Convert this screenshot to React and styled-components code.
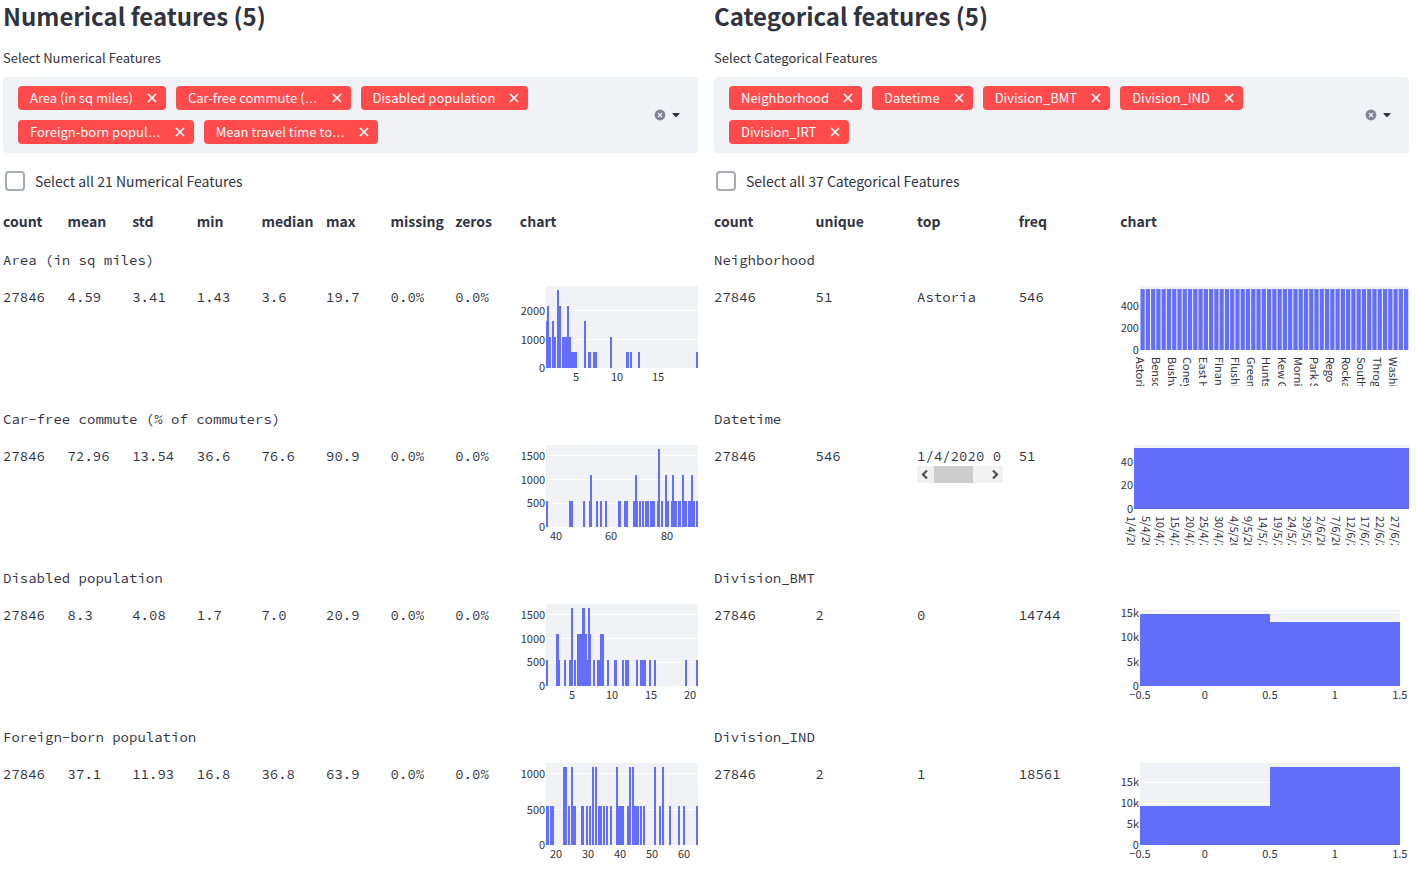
import React, { useId } from "react";
import styled, { createGlobalStyle } from "styled-components";

const INK = "#31333f";
const PANEL = "#f0f2f6";
const BAR = "#636efa";
const SANS = '"Source Sans Pro", "Noto Sans CJK SC", "Open Sans", sans-serif';
const MONO = '"Source Code Pro", "Liberation Mono", monospace';

const GlobalStyle = createGlobalStyle`
  *, *::before, *::after { box-sizing: border-box; }
  body { margin: 0; background: #fff; color: ${INK}; font-family: ${SANS}; }
  button, input { font: inherit; color: inherit; }
`;

const Page = styled.main`
  display: grid;
  grid-template-columns: minmax(0, 1fr) minmax(0, 1fr);
  gap: 16px;
  padding: 0 7px 0 3px;
`;

const Panel = styled.section`
  display: flex;
  flex-direction: column;
  min-width: 0;
`;

const Title = styled.h2`
  margin: 0;
  font-size: 24px;
  line-height: 32px;
  font-weight: 700;
`;

const FieldLabel = styled.label`
  margin-top: 16px;
  font-size: 13px;
  line-height: 20px;
`;

const MultiSelect = styled.div`
  display: flex;
  align-items: center;
  margin-top: 9px;
  padding: 9px 14px 9px 15px;
  border-radius: 4px;
  background: ${PANEL};
`;

const Tags = styled.div`
  display: flex;
  flex: 1;
  flex-wrap: wrap;
  gap: 10px;
  max-width: 560px;
  margin-right: auto;
`;

const Tag = styled.span`
  display: inline-flex;
  align-items: center;
  height: 24px;
  padding: 0 8px 0 12px;
  gap: 13px;
  border-radius: 4px;
  background: #ff4b4b;
  color: #fff;
  font-size: 13px;
  line-height: 24px;
  white-space: nowrap;
`;

const Ellipsis = styled.span`
  font-family: "Liberation Sans", sans-serif;
`;

const IconButton = styled.button`
  display: inline-flex;
  align-items: center;
  justify-content: center;
  width: ${(p) => p.$width}px;
  height: 16px;
  padding: 0;
  border: 0;
  background: none;
`;

const TagInput = styled.input`
  width: 8px;
  height: 24px;
  padding: 0;
  border: 0;
  outline: 0;
  background: transparent;
`;

const Controls = styled.div`
  display: flex;
  align-items: center;
`;

const CheckRow = styled.label`
  display: flex;
  align-items: center;
  gap: 10px;
  margin-top: 16px;
  padding-left: 2px;
  font-size: 14px;
  line-height: 24px;
`;

const Checkbox = styled.input`
  appearance: none;
  width: 20px;
  height: 20px;
  margin: 0;
  border: 2px solid #a9abb2;
  border-radius: 4px;
  background: #fff;
`;

const Table = styled.table`
  display: block;
  margin-top: 17px;
  thead, tbody { display: block; }
`;

const Row = styled.tr`
  display: grid;
  grid-template-columns: ${(p) => p.$columns};
  column-gap: 16px;
`;

const HeadCell = styled.th`
  padding: 0 0 2px;
  font-size: 14px;
  line-height: 22px;
  font-weight: 700;
  text-align: left;
  white-space: nowrap;
`;

const NameRow = styled.tr`
  display: block;
`;

const NameCell = styled.th`
  display: block;
  padding: 15px 0;
  font-family: ${MONO};
  font-size: 14px;
  line-height: 22px;
  font-weight: 400;
  text-align: left;
`;

const ValueRow = styled(Row)`
  height: 107px;
`;

const ValueCell = styled.td`
  min-width: 0;
  padding: 0;
  font-family: ${MONO};
  font-size: 14px;
  line-height: 22px;
  white-space: nowrap;
`;

const Clipped = styled.div`
  height: 21px;
  overflow: hidden;
`;

const ScrollBar = styled.div`
  display: flex;
  height: 17px;
  background: #f1f1f1;
`;

const ScrollTrack = styled.div`
  flex: 1;
`;

const ScrollThumb = styled.div`
  width: 75%;
  height: 17px;
  background: #cdcdcd;
`;

const ChartCell = styled.td`
  min-width: 0;
  padding: 0;
`;

const ChartSvg = styled.svg`
  display: block;
  width: 100%;
  height: 100px;
  overflow: hidden;
  font-family: ${SANS};
  font-size: 11px;
  fill: ${INK};
`;

function Cross() {
  return (
    <svg width="10" height="10" viewBox="0 0 10 10" fill="none" stroke="#fff" strokeWidth="1.7">
      <path d="M1 1 9 9M9 1 1 9" />
    </svg>
  );
}

function ClearIcon() {
  return (
    <svg width="12" height="12" viewBox="0 0 12 12">
      <circle cx="6" cy="6" r="5.4" fill="#808495" />
      <path d="M4 4 8 8M8 4 4 8" stroke={PANEL} strokeWidth="1.1" />
    </svg>
  );
}

function CaretIcon() {
  return (
    <svg width="8" height="4" viewBox="0 0 8 4">
      <path d="M.9 0H7.1Q7.9 .4 7.3 1.1L4.7 3.7Q4 4.2 3.3 3.7L.7 1.1Q.1 .4 .9 0Z" fill={INK} />
    </svg>
  );
}

function Arrow({ d }) {
  return (
    <svg width="17" height="17" viewBox="0 0 17 17" fill="none" stroke="#505050" strokeWidth="2.2">
      <path d={d} />
    </svg>
  );
}

/* Bars are [left, right, level]; levels index into the bar tops of a chart. */
function Chart({ label, width, left, right = width, top = 0, bottom, grid, yTicks, xTicks, bars, tops, smooth, turned }) {
  return (
    <ChartSvg viewBox={`0 0 ${width} 100`} role="img" aria-label={label}>
      <g shapeRendering="crispEdges">
        <rect x={left} y={top} width={right - left} height={bottom - top} fill={PANEL} />
        {grid.map((y) => (
          <rect key={y} x={left} y={y} width={right - left} height="1" fill="#fff" />
        ))}
      </g>
      <g fill={BAR} shapeRendering={smooth ? "auto" : "crispEdges"}>
        {bars.map(([a, b, n]) => (
          <rect key={a} x={a} y={tops[n]} width={b - a} height={bottom - tops[n]} />
        ))}
      </g>
      <g textAnchor="end">
        {yTicks.map(([text, y]) => (
          <text key={text} x={left - 1} y={y + 4}>{text}</text>
        ))}
      </g>
      {turned
        ? xTicks.map(([text, x]) => (
            <text key={text} transform={`translate(${x - 4} 71) rotate(90)`}>{text}</text>
          ))
        : xTicks.map(([text, x]) => (
            <text key={text} x={x} y={bottom + 13} textAnchor="middle">{text}</text>
          ))}
    </ChartSvg>
  );
}

const histogram = { width: 178, left: 26, bottom: 82 };
const wide = { width: 289, left: 20 };

const areaChart = {
  ...histogram,
  grid: [24, 53],
  yTicks: [["2000", 25], ["1000", 54], ["0", 82]],
  xTicks: [["5", 56], ["10", 97], ["15", 138]],
  tops: [82, 66, 51, 35, 20, 4],
  bars: [
    [26, 27, 3], [27, 29, 4], [29, 31, 2], [32, 34, 3], [34, 36, 2], [37, 39, 5], [39, 41, 4],
    [42, 47, 2], [47, 49, 4], [49, 51, 2], [51, 57, 1], [64, 66, 3], [68, 71, 1], [73, 77, 1],
    [90, 92, 2], [106, 109, 1], [110, 112, 1], [118, 120, 1], [176, 178, 1],
  ],
};

const thousandFiveHundred = {
  ...histogram,
  grid: [10, 34, 58],
  yTicks: [["1500", 11], ["1000", 35], ["500", 58], ["0", 82]],
  tops: [82, 56, 30, 4],
};

const commuteChart = {
  ...thousandFiveHundred,
  xTicks: [["40", 36], ["60", 91], ["80", 147]],
  bars: [
    [26, 28, 1], [49, 53, 1], [63, 65, 1], [69, 70, 1], [70, 72, 2], [76, 78, 1], [80, 82, 1],
    [85, 87, 1], [98, 101, 1], [104, 108, 1], [113, 115, 1], [115, 117, 2], [117, 118, 1],
    [119, 121, 1], [122, 124, 1], [125, 129, 1], [130, 135, 1], [137, 138, 1], [138, 140, 3],
    [141, 143, 1], [145, 147, 2], [147, 149, 1], [151, 152, 1], [152, 154, 2], [154, 157, 1],
    [158, 161, 1], [162, 164, 2], [164, 167, 1], [168, 171, 1], [171, 173, 2], [173, 175, 1],
    [176, 178, 1],
  ],
};

const disabledChart = {
  ...thousandFiveHundred,
  xTicks: [["5", 52], ["10", 92], ["15", 131], ["20", 170]],
  bars: [
    [26, 28, 1], [36, 39, 2], [39, 40, 1], [44, 46, 1], [49, 51, 1], [51, 53, 3], [54, 56, 1],
    [57, 62, 2], [62, 65, 3], [65, 67, 2], [67, 68, 1], [68, 70, 3], [70, 71, 2], [73, 75, 1],
    [77, 80, 1], [80, 84, 2], [87, 89, 1], [94, 97, 1], [102, 104, 1], [105, 109, 1],
    [116, 118, 1], [120, 126, 1], [129, 131, 1], [134, 136, 1], [165, 167, 1], [176, 178, 1],
  ],
};

const foreignChart = {
  ...histogram,
  grid: [10, 46],
  yTicks: [["1000", 11], ["500", 47], ["0", 82]],
  xTicks: [["20", 36], ["30", 68], ["40", 100], ["50", 132], ["60", 164]],
  tops: [82, 43, 4],
  bars: [
    [26, 29, 1], [30, 34, 1], [43, 47, 2], [48, 50, 1], [51, 53, 2], [53, 56, 1], [61, 64, 1],
    [66, 68, 1], [69, 71, 1], [72, 74, 2], [75, 77, 2], [78, 82, 1], [83, 85, 1], [86, 88, 1],
    [90, 92, 1], [96, 98, 2], [98, 104, 1], [107, 109, 1], [109, 111, 2], [112, 114, 2],
    [114, 119, 1], [120, 122, 1], [123, 125, 1], [134, 136, 2], [139, 141, 1], [142, 144, 2],
    [149, 151, 1], [158, 160, 1], [163, 165, 1], [176, 178, 1],
  ],
};

const places = [
  "Astoria", "Bensonhurst", "Bushwick", "Coney Island", "East Harlem", "Financial District",
  "Flushing", "Greenwich Village", "Hunts Point", "Kew Gardens", "Morningside", "Park Slope",
  "Rego Park", "Rockaways", "South Beach", "Throgs Neck", "Washington Heights",
];
const placeStep = 269 / 51;

const neighborhoodChart = {
  ...wide,
  bottom: 64,
  turned: true,
  smooth: true,
  grid: [19, 41],
  yTicks: [["400", 20], ["200", 42], ["0", 64]],
  xTicks: places.map((name, i) => [name, 20 + i * 3 * placeStep]),
  tops: [64, 3],
  bars: Array.from({ length: 51 }, (_, i) => [
    20 + (i + 0.1) * placeStep,
    20 + (i + 0.9) * placeStep,
    1,
  ]),
};

const dates = [
  "1/4/2020", "5/4/2020", "10/4/2020", "15/4/2020", "20/4/2020", "25/4/2020", "30/4/2020",
  "4/5/2020", "9/5/2020", "14/5/2020", "19/5/2020", "24/5/2020", "29/5/2020", "2/6/2020",
  "7/6/2020", "12/6/2020", "17/6/2020", "22/6/2020", "27/6/2020",
];

const datetimeChart = {
  ...wide,
  left: 14,
  bottom: 64,
  turned: true,
  grid: [],
  yTicks: [["40", 17], ["20", 40], ["0", 64]],
  xTicks: dates.map((date, i) => [date, 11 + (i * 264) / 18]),
  tops: [64, 3],
  bars: [[14, 289, 1]],
};

const halves = [["−0.5", 20], ["0", 85], ["0.5", 150], ["1", 215], ["1.5", 280]];

const bmtChart = {
  ...wide,
  right: 280,
  top: 6,
  bottom: 82,
  grid: [8],
  yTicks: [["15k", 9], ["10k", 33], ["5k", 58], ["0", 82]],
  xTicks: halves,
  tops: [82, 10, 18],
  bars: [[20, 150, 1], [150, 280, 2]],
};

const indChart = {
  ...wide,
  right: 280,
  bottom: 82,
  grid: [19, 40],
  yTicks: [["15k", 19], ["10k", 40], ["5k", 61], ["0", 82]],
  xTicks: halves,
  tops: [82, 43, 4],
  bars: [[20, 150, 1], [150, 280, 2]],
};

const numerical = {
  kind: "Numerical",
  total: 21,
  columns: "repeat(8, minmax(0, 3fr)) minmax(0, 11fr)",
  tags: ["Area (in sq miles)", "Car-free commute (…", "Disabled population", "Foreign-born popul…", "Mean travel time to…"],
  heads: ["count", "mean", "std", "min", "median", "max", "missing", "zeros", "chart"],
  rows: [
    { name: "Area (in sq miles)", values: ["27846", "4.59", "3.41", "1.43", "3.6", "19.7", "0.0%", "0.0%"], chart: areaChart },
    { name: "Car-free commute (% of commuters)", values: ["27846", "72.96", "13.54", "36.6", "76.6", "90.9", "0.0%", "0.0%"], chart: commuteChart },
    { name: "Disabled population", values: ["27846", "8.3", "4.08", "1.7", "7.0", "20.9", "0.0%", "0.0%"], chart: disabledChart },
    { name: "Foreign-born population", values: ["27846", "37.1", "11.93", "16.8", "36.8", "63.9", "0.0%", "0.0%"], chart: foreignChart },
  ],
};

const categorical = {
  kind: "Categorical",
  total: 37,
  columns: "repeat(4, minmax(0, 8fr)) minmax(0, 27fr)",
  tags: ["Neighborhood", "Datetime", "Division_BMT", "Division_IND", "Division_IRT"],
  heads: ["count", "unique", "top", "freq", "chart"],
  rows: [
    { name: "Neighborhood", values: ["27846", "51", "Astoria", "546"], chart: neighborhoodChart },
    { name: "Datetime", values: ["27846", "546", "1/4/2020 0", "51"], scrolled: 2, chart: datetimeChart },
    { name: "Division_BMT", values: ["27846", "2", "0", "14744"], chart: bmtChart },
    { name: "Division_IND", values: ["27846", "2", "1", "18561"], chart: indChart },
  ],
};

function TagText({ text }) {
  if (!text.endsWith("…")) return <span>{text}</span>;
  return (
    <span>
      {text.slice(0, -1)}
      <Ellipsis>…</Ellipsis>
    </span>
  );
}

function ScrolledValue({ value }) {
  return (
    <>
      <Clipped>{value}</Clipped>
      <ScrollBar>
        <Arrow d="M10 4.5 6 8.5 10 12.5" />
        <ScrollTrack>
          <ScrollThumb />
        </ScrollTrack>
        <Arrow d="M7 4.5 11 8.5 7 12.5" />
      </ScrollBar>
    </>
  );
}

function FeaturePanel({ kind, total, columns, tags, heads, rows }) {
  const id = useId();
  return (
    <Panel>
      <Title>{`${kind} features (${tags.length})`}</Title>
      <FieldLabel htmlFor={id}>{`Select ${kind} Features`}</FieldLabel>
      <MultiSelect>
        <Tags>
          {tags.map((tag) => (
            <Tag key={tag}>
              <TagText text={tag} />
              <IconButton type="button" $width={12} aria-label={`Remove ${tag}`}>
                <Cross />
              </IconButton>
            </Tag>
          ))}
          <TagInput id={id} type="text" />
        </Tags>
        <Controls>
          <IconButton type="button" $width={16} aria-label="Clear all">
            <ClearIcon />
          </IconButton>
          <IconButton type="button" $width={16} aria-label="Open list">
            <CaretIcon />
          </IconButton>
        </Controls>
      </MultiSelect>
      <CheckRow>
        <Checkbox type="checkbox" />
        {`Select all ${total} ${kind} Features`}
      </CheckRow>
      <Table>
        <thead>
          <Row $columns={columns}>
            {heads.map((head) => (
              <HeadCell key={head} scope="col">{head}</HeadCell>
            ))}
          </Row>
        </thead>
        <tbody>
          {rows.map((row) => (
            <React.Fragment key={row.name}>
              <NameRow>
                <NameCell colSpan={heads.length}>{row.name}</NameCell>
              </NameRow>
              <ValueRow $columns={columns}>
                {row.values.map((value, i) => (
                  <ValueCell key={heads[i]}>
                    {row.scrolled === i ? <ScrolledValue value={value} /> : value}
                  </ValueCell>
                ))}
                <ChartCell>
                  <Chart label={`${row.name} distribution`} {...row.chart} />
                </ChartCell>
              </ValueRow>
            </React.Fragment>
          ))}
        </tbody>
      </Table>
    </Panel>
  );
}

export default function App() {
  return (
    <>
      <GlobalStyle />
      <Page>
        <FeaturePanel {...numerical} />
        <FeaturePanel {...categorical} />
      </Page>
    </>
  );
}
